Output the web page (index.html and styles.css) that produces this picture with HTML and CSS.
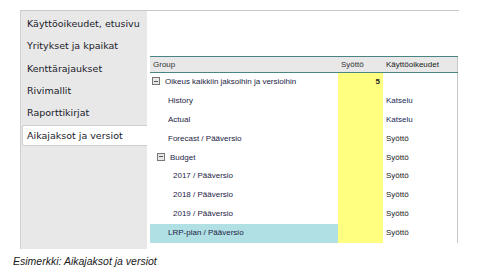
FILE: index.html
```html
<!DOCTYPE html>
<html lang="fi">
<head>
    <meta charset="UTF-8">
    <title>Aikajaksot ja versiot</title>
    <link rel="stylesheet" href="styles.css">
</head>
<body>
    <div class="frame">
        <div class="sidebar">
            <div class="item">Käyttöoikeudet, etusivu</div>
            <div class="item">Yritykset ja kpaikat</div>
            <div class="item">Kenttärajaukset</div>
            <div class="item">Rivimallit</div>
            <div class="item">Raporttikirjat</div>
            <div class="item active">Aikajaksot ja versiot</div>
        </div>
        <div class="content">
            <div class="grid">
                <div class="row head">
                    <div class="c-group">Group</div>
                    <div class="c-input">Syöttö</div>
                    <div class="c-right">Käyttöoikeudet</div>
                </div>
                <div class="row">
                    <div class="c-group lvl0"><span class="toggle"></span>Oikeus kaikkiin jaksoihin ja versioihin</div>
                    <div class="c-input num">5</div>
                    <div class="c-right"></div>
                </div>
                <div class="row">
                    <div class="c-group lvl1">History</div>
                    <div class="c-input"></div>
                    <div class="c-right blue">Katselu</div>
                </div>
                <div class="row">
                    <div class="c-group lvl1">Actual</div>
                    <div class="c-input"></div>
                    <div class="c-right blue">Katselu</div>
                </div>
                <div class="row">
                    <div class="c-group lvl1">Forecast / Pääversio</div>
                    <div class="c-input"></div>
                    <div class="c-right">Syöttö</div>
                </div>
                <div class="row">
                    <div class="c-group lvl1b"><span class="toggle"></span>Budget</div>
                    <div class="c-input"></div>
                    <div class="c-right">Syöttö</div>
                </div>
                <div class="row">
                    <div class="c-group lvl2">2017 / Pääversio</div>
                    <div class="c-input"></div>
                    <div class="c-right">Syöttö</div>
                </div>
                <div class="row">
                    <div class="c-group lvl2">2018 / Pääversio</div>
                    <div class="c-input"></div>
                    <div class="c-right">Syöttö</div>
                </div>
                <div class="row">
                    <div class="c-group lvl2">2019 / Pääversio</div>
                    <div class="c-input"></div>
                    <div class="c-right">Syöttö</div>
                </div>
                <div class="row">
                    <div class="c-group lvl1 selected">LRP-plan / Pääversio</div>
                    <div class="c-input"></div>
                    <div class="c-right">Syöttö</div>
                </div>
            </div>
        </div>
    </div>
    <div class="caption">Esimerkki: Aikajaksot ja versiot</div>
</body>
</html>
```

FILE: styles.css
```css
body {
    margin: 0;
    padding: 10px 0 0 20px;
    background-color: #fff;
    font-family: "DejaVu Sans", Verdana, sans-serif;
}

.frame {
    width: 439px;
    height: 238px;
    border-top: 1px solid #c8c8c8;
    display: flex;
}

.sidebar {
    width: 126px;
    background-color: #e8e8e8;
    border-left: 1px solid #d0d0d0;
    padding-top: 2px;
}

.item {
    height: 22.3px;
    line-height: 22.3px;
    padding-left: 6px;
    font-size: 9.5px;
    color: #1a1a2a;
    white-space: nowrap;
}

.item.active {
    height: 19px;
    line-height: 19px;
    margin: 1px 0 0 1px;
    padding-left: 4px;
    background-color: #fff;
    border: 1px solid #cfcfcf;
    border-right: none;
    border-radius: 2px 0 0 2px;
}

.content {
    flex-grow: 1;
    padding: 45px 0 0 3px;
}

.grid {
    width: 308px;
    font-family: "Liberation Sans", Arial, sans-serif;
    font-size: 8px;
    color: #1c1c44;
}

.row {
    display: flex;
    height: 18.9px;
    line-height: 18.9px;
}

.row.head {
    height: 15px;
    line-height: 15px;
    background-color: #e8e8e8;
    border-top: 1px solid #4a8585;
    border-bottom: 1px solid #4a8585;
    color: #333;
}

.c-group {
    width: 188px;
    padding-left: 3px;
    box-sizing: border-box;
    white-space: nowrap;
}

.c-input {
    width: 45px;
    padding: 0 3px;
    box-sizing: border-box;
    background-color: #ffff80;
}

.head .c-input {
    background-color: transparent;
}

.c-input.num {
    text-align: right;
    font-weight: bold;
    color: #222;
}

.c-right {
    width: 75px;
    padding-left: 3px;
    box-sizing: border-box;
    border-right: 1px solid #c8c8c8;
    color: #1a1a1a;
}

.c-right.blue {
    color: #1c2a5a;
}

.lvl0 {
    padding-left: 2px;
}

.lvl1 {
    padding-left: 18px;
}

.lvl1b {
    padding-left: 7px;
}

.lvl2 {
    padding-left: 23px;
}

.selected {
    background-color: #b0dfe4;
}

.toggle {
    display: inline-block;
    width: 6px;
    height: 6px;
    margin-right: 5px;
    border: 1px solid #777;
    background: linear-gradient(#555, #555) center / 4px 1px no-repeat, #e8e8e8;
    vertical-align: -1px;
}

.caption {
    margin: 6px 0 0 -7px;
    font-family: "Liberation Sans", Arial, sans-serif;
    font-style: italic;
    font-size: 10.5px;
    color: #1a1a1a;
}
```
